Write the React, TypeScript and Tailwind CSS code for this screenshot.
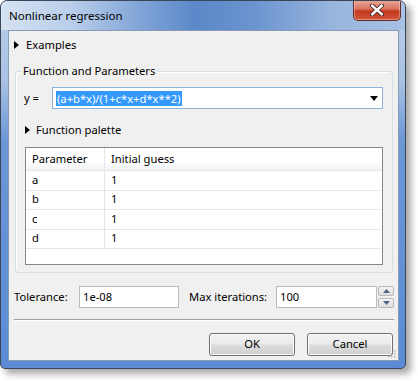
const font = { fontFamily: '"Noto Sans", "Open Sans", sans-serif' };

const rows = ["a", "b", "c", "d"];

function RightTri() {
  return (
    <svg width="5" height="8" viewBox="0 0 5 8" className="shrink-0">
      <path d="M0 0 L5 4 L0 8 Z" fill="#000" />
    </svg>
  );
}

function CloseButton() {
  return (
    <div className="-mt-px w-[48px] h-[21px] rounded-b-[5px] border border-t-0 border-[#6d2a20] bg-[linear-gradient(180deg,#e9a89b_0%,#d9735f_45%,#c4381c_55%,#d0553a_100%)] flex items-center justify-center shadow-[inset_0_0_0_1px_rgba(255,255,255,0.35)]">
      <svg width="14" height="12" viewBox="0 0 14 12">
        <path d="M2 1.5 L12 10.5 M12 1.5 L2 10.5" stroke="#4a2a25" strokeWidth="4.2" strokeLinecap="square" />
        <path d="M2.3 1.8 L11.7 10.2 M11.7 1.8 L2.3 10.2" stroke="#fff" strokeWidth="2.4" strokeLinecap="square" />
      </svg>
    </div>
  );
}

function Button({ label }: { label: string }) {
  return (
    <button className="w-[86px] h-[23px] rounded-[3px] border border-[#707070] bg-[linear-gradient(180deg,#f2f2f2_0%,#ebebeb_48%,#dddddd_52%,#cfcfcf_100%)] shadow-[inset_0_0_0_1px_#fcfcfc] text-[11.2px] text-black flex items-center justify-center">
      {label}
    </button>
  );
}

export default function App() {
  return (
    <div className="w-[418px] h-[381px] bg-white text-[11.2px] text-black" style={font}>
      <div className="w-[406px] h-[369px] rounded-t-[7px] rounded-b-[5px] border border-[#3b4656] bg-[linear-gradient(180deg,#b9cdea_0%,#a9c2e4_22%,#6b97d6_38%,#5a8bd4_100%)] shadow-[5px_5px_7px_rgba(0,0,0,0.35)] flex flex-col overflow-hidden">
        <div className="h-[29px] shrink-0 flex items-start justify-between pr-[4px] rounded-t-[6px] bg-[linear-gradient(90deg,#d5e2f2_0%,#b8cdea_18%,#7ea3d6_35%,#5c88c9_48%,#6a93cf_62%,#98b5de_82%,#a7c1e4_100%)]">
          <span className="pl-[8px] h-[29px] flex items-center text-[11.5px] text-black">Nonlinear regression</span>
          <CloseButton />
        </div>
        <div className="relative ml-[7px] mr-[6px] h-[331px] border border-[#8a9ab3] bg-[#f0f0f0] flex flex-col">
          <div className="mt-[4px] h-[20px] flex items-center pl-[5px] gap-[7px]">
            <RightTri />
            <span>Examples</span>
          </div>

          <div className="relative mt-[16px] ml-[6px] w-[378px] h-[202px] rounded-[3px] border border-[#d5dfe5] shadow-[inset_1px_1px_0_#fff] flex flex-col">
            <span className="absolute -top-[10px] left-[5px] px-[2px] bg-[#f0f0f0] leading-[18px]">Function and Parameters</span>

            <div className="mt-[15px] h-[22px] flex items-center pl-[8px] pr-[9px]">
              <span className="w-[28px]">y =</span>
              <div className="flex-1 h-[22px] border border-[#8eb4da] bg-white flex items-center pl-[3px] pr-[4px]">
                <span className="h-[15px] px-[1px] bg-[#3399ff] text-white leading-[15px]">(a+b*x)/(1+c*x+d*x**2)</span>
                <span className="flex-1" />
                <svg width="8" height="5" viewBox="0 0 8 5">
                  <path d="M0 0 H8 L4 5 Z" fill="#000" />
                </svg>
              </div>
            </div>

            <div className="mt-[11px] h-[20px] flex items-center pl-[9px] gap-[6px]">
              <RightTri />
              <span>Function palette</span>
            </div>

            <div className="mt-[7px] ml-[9px] w-[358px] h-[118px] border border-[#828790] bg-white flex flex-col">
              <div className="h-[23px] flex border-b border-[#e5e5e5] bg-[linear-gradient(180deg,#ffffff_0%,#ffffff_60%,#f1f2f4_100%)]">
                <div className="w-[79px] pl-[6px] flex items-center border-r border-[#e5e5e5]">Parameter</div>
                <div className="flex-1 pl-[6px] flex items-center">Initial guess</div>
              </div>
              {rows.map((r) => (
                <div key={r} className="h-[19.5px] flex border-b border-[#e6e6e6] mr-[1px]">
                  <div className="w-[79px] pl-[6px] flex items-center border-r border-[#e6e6e6]">{r}</div>
                  <div className="flex-1 pl-[6px] flex items-center">1</div>
                </div>
              ))}
            </div>
          </div>

          <div className="mt-[13px] h-[22px] flex items-center pl-[5px]">
            <span className="w-[65px]">Tolerance:</span>
            <div className="w-[100px] h-[22px] border border-[#b6bcc6] bg-white flex items-center pl-[3px]">1e-08</div>
            <span className="ml-[10px] w-[87px]">Max iterations:</span>
            <div className="w-[101px] h-[22px] border border-[#b6bcc6] bg-white flex items-center pl-[3px]">100</div>
            <div className="ml-[1px] w-[16px] h-[22px] flex flex-col justify-between">
              <div className="h-[10px] rounded-[2px] border border-[#b9b9b9] bg-[linear-gradient(180deg,#f5f5f5,#dedede)] flex items-center justify-center">
                <svg width="7" height="4" viewBox="0 0 7 4"><path d="M0 4 H7 L3.5 0 Z" fill="#4d6185" /></svg>
              </div>
              <div className="h-[10px] rounded-[2px] border border-[#b9b9b9] bg-[linear-gradient(180deg,#f5f5f5,#dedede)] flex items-center justify-center">
                <svg width="7" height="4" viewBox="0 0 7 4"><path d="M0 0 H7 L3.5 4 Z" fill="#4d6185" /></svg>
              </div>
            </div>
          </div>

          <div className="mt-[11px] ml-[5px] w-[380px] border-t border-[#a0a0a0] border-b border-b-white" />

          <div className="mt-[12px] flex justify-end gap-[12px] pr-[5px]">
            <Button label="OK" />
            <Button label="Cancel" />
          </div>

          <svg className="absolute right-[2px] bottom-[2px]" width="10" height="10" viewBox="0 0 10 10">
            {[[8, 2], [8, 5], [5, 5], [8, 8], [5, 8], [2, 8]].map(([x, y]) => (
              <rect key={`${x}-${y}`} x={x} y={y} width="1.5" height="1.5" fill="#b0b0b0" />
            ))}
          </svg>
        </div>
      </div>
    </div>
  );
}
